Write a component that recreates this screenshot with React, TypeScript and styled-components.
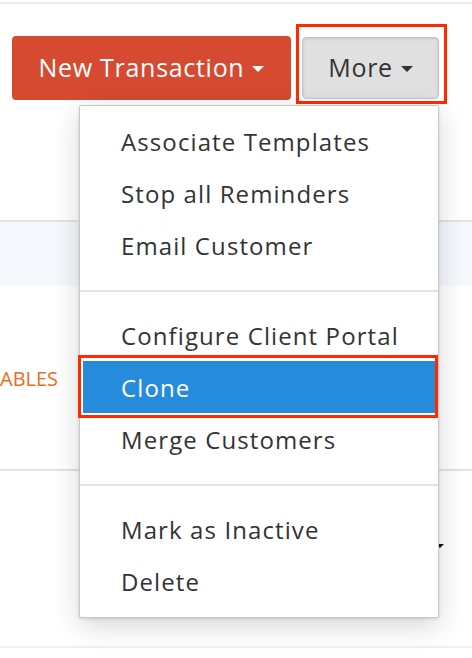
import React from 'react';
import styled, { createGlobalStyle } from 'styled-components';

const GlobalStyle = createGlobalStyle`
  html, body {
    margin: 0;
    padding: 0;
    background: #fff;
  }
  body {
    font-family: "Open Sans", Lato, sans-serif;
    color: #333;
  }
`;

const Page = styled.div`
  position: relative;
  width: 472px;
  height: 658px;
  overflow: hidden;
  background: #fff;
`;

const TopRule = styled.div`
  margin-top: 2px;
  height: 2px;
  background: #ebebeb;
`;

const Toolbar = styled.div`
  display: flex;
  align-items: flex-start;
  gap: 5px;
  padding: 20px 25px 0 12px;
  height: 216px;
  box-sizing: border-box;
`;

const Caret = styled.span<{ $color: string }>`
  display: inline-block;
  width: 0;
  height: 0;
  margin-left: 8px;
  border-left: 6px solid transparent;
  border-right: 6px solid transparent;
  border-top: 6px solid ${(p) => p.$color};
  transform: translateY(2px);
`;

const PrimaryButton = styled.button`
  display: flex;
  align-items: center;
  justify-content: center;
  width: 280px;
  height: 64px;
  margin-top: 12px;
  border: none;
  border-radius: 4px;
  background: #d64a32;
  color: #fff;
  font: 400 25px "Open Sans", sans-serif;
  letter-spacing: 0.7px;
  padding: 0 0 2px;
`;

const Callout = styled.div`
  border: 3px solid #ff2a00;
  padding: 10px 5px 2px 3px;
`;

const SecondaryButton = styled.button`
  display: flex;
  align-items: center;
  justify-content: center;
  width: 137px;
  height: 62px;
  border: 1px solid #c4c4c4;
  border-radius: 4px;
  background: #e0e0e0;
  color: #333;
  font: 400 25px "Open Sans", sans-serif;
  letter-spacing: 0.7px;
  padding: 0 0 2px;
  box-shadow: inset 0 1px 3px rgba(0, 0, 0, 0.12);
`;

const Divider = styled.div<{ $tone?: string }>`
  height: 2px;
  background: ${(p) => p.$tone || '#e3e3e3'};
`;

const Band = styled.div`
  height: 64px;
  background: #f5f8fc;
`;

const Row = styled.div<{ $h: number }>`
  display: flex;
  align-items: center;
  height: ${(p) => p.$h}px;
`;

const Tag = styled.span`
  margin-top: 2px;
  color: #f26a1b;
  font: 400 20px "Open Sans", sans-serif;
`;

const HiddenCaret = styled.span`
  position: absolute;
  left: 436px;
  top: 544px;
  width: 0;
  height: 0;
  border-left: 4px solid transparent;
  border-right: 4px solid transparent;
  border-top: 4px solid #111;
`;

const Menu = styled.ul`
  position: absolute;
  left: 79px;
  top: 105px;
  width: 360px;
  box-sizing: border-box;
  margin: 0;
  padding: 0;
  list-style: none;
  background: #fff;
  border: 1px solid #c9c9c9;
  border-radius: 2px;
  box-shadow: 0 8px 28px rgba(0, 0, 0, 0.16), 0 1px 3px rgba(0, 0, 0, 0.12);
`;

const Group = styled.li`
  padding: 9px 0 19px;
  & + & {
    border-top: 2px solid #e3e3e3;
    padding-top: 17px;
  }
  &:last-child {
    padding-bottom: 10px;
  }
`;

const ItemWrap = styled.div<{ $marked?: boolean }>`
  position: relative;
  ${(p) =>
    p.$marked &&
    `
    &::after {
      content: '';
      position: absolute;
      left: -2px;
      right: 0;
      top: -6px;
      bottom: -5px;
      border: 3px solid #ff2a00;
      pointer-events: none;
    }
  `}
`;

const Item = styled.div<{ $active?: boolean }>`
  display: flex;
  align-items: center;
  height: 52px;
  margin: 0 ${(p) => (p.$active ? '3px' : '0')};
  padding-left: ${(p) => (p.$active ? '38px' : '41px')};
  background: ${(p) => (p.$active ? '#278bdc' : 'transparent')};
  color: ${(p) => (p.$active ? '#fff' : '#333')};
  font: 400 24px "Open Sans", sans-serif;
  letter-spacing: 1.1px;
  white-space: nowrap;
`;

const groups: { label: string; active?: boolean }[][] = [
  [{ label: 'Associate Templates' }, { label: 'Stop all Reminders' }, { label: 'Email Customer' }],
  [{ label: 'Configure Client Portal' }, { label: 'Clone', active: true }, { label: 'Merge Customers' }],
  [{ label: 'Mark as Inactive' }, { label: 'Delete' }],
];

const App: React.FC = () => (
  <Page>
    <GlobalStyle />
    <TopRule />
    <Toolbar>
      <PrimaryButton>
        New Transaction
        <Caret $color="#fff" />
      </PrimaryButton>
      <Callout>
        <SecondaryButton>
          More
          <Caret $color="#333" />
        </SecondaryButton>
      </Callout>
    </Toolbar>
    <Divider />
    <Band />
    <Row $h={183}>
      <Tag>ABLES</Tag>
    </Row>
    <Divider />
    <Row $h={175} />
    <Divider $tone="#f0f0f0" />
    <HiddenCaret />
    <Menu>
      {groups.map((g, i) => (
        <Group key={i}>
          {g.map((it) => (
            <ItemWrap key={it.label} $marked={it.active}>
              <Item $active={it.active}>{it.label}</Item>
            </ItemWrap>
          ))}
        </Group>
      ))}
    </Menu>
  </Page>
);

export default App;
